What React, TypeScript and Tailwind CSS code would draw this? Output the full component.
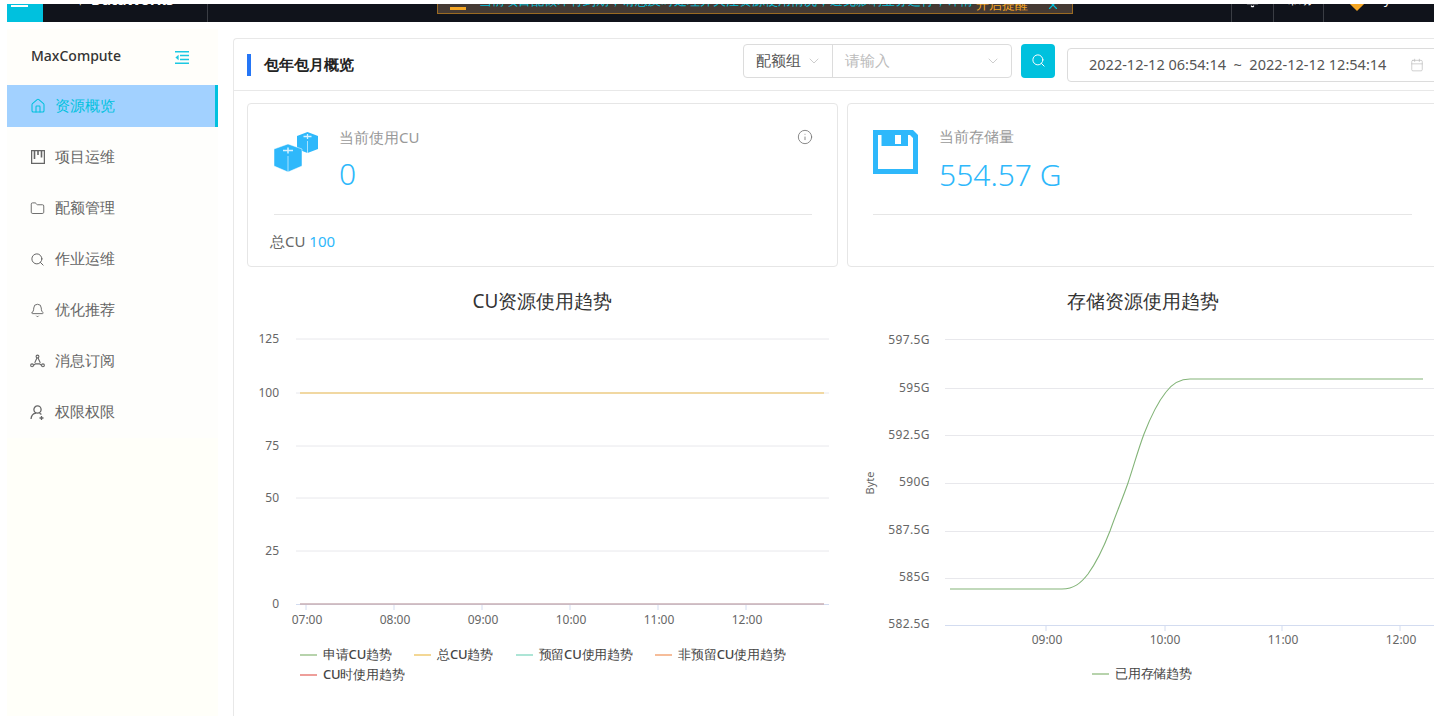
import { Bell, Calendar, ChevronDown, Folder, Home, Info, Search, X } from "lucide-react";

const FONT = "font-['Noto_Sans','Noto_Sans_CJK_SC',sans-serif]";

function KanbanIcon() {
  return (
    <svg viewBox="0 0 14 14" className="w-[14px] h-[14px]" fill="none" stroke="currentColor" strokeWidth="1.3">
      <rect x="0.6" y="0.6" width="12.8" height="12.8" />
      <path d="M3.5 1v8M7 1v4M10.500 1v6.500" strokeWidth="1.600" />
    </svg>
  );
}

function NetworkIcon() {
  return (
    <svg viewBox="0 0 16 14" className="w-[15px] h-[14px]" fill="none" stroke="currentColor" strokeWidth="1.2">
      <circle cx="8" cy="2.2" r="1.5" />
      <circle cx="2.2" cy="11.6" r="1.5" />
      <circle cx="13.8" cy="11.6" r="1.5" />
      <path d="M7.4 3.8 5 9M8.6 3.8 11 9M3.8 11.6l2-1.6h4.4l2 1.6" />
    </svg>
  );
}

function UserAddIcon() {
  return (
    <svg viewBox="0 0 15 15" className="w-[15px] h-[15px]" fill="none" stroke="currentColor" strokeWidth="1.3">
      <circle cx="7.5" cy="4.5" r="3.6" />
      <path d="M1 14c.3-3.4 2.2-5.6 5-5.900M9.400 8.400c.8.2 1.500.6 2 1.100M11.500 11v4M9.500 13h4" />
    </svg>
  );
}

function CollapseIcon() {
  return (
    <svg viewBox="0 0 14 13" className="w-[14px] h-[13px]" fill="none" stroke="#1cc8e2" strokeWidth="1.4">
      <path d="M0 .8h14M5 4.500h9M5 8.500h9M0 12.200h14" />
      <path d="M3.600 3.800 .4 6.500l3.200 2.700z" fill="#1cc8e2" stroke="none" />
    </svg>
  );
}

function CubesIcon() {
  return (
    <svg viewBox="0 0 44 40" className="w-[44px] h-[40px]">
      <path d="M33.500 0 44 4v13l-10.500 4L23 17V4z" fill="#2eb8fb" />
      <path d="M33.500 9v12" stroke="#fff" strokeWidth=".6" />
      <path d="M29.500 4.500h8M33.500 2v5" stroke="#d8f1ff" strokeWidth="1.300" />
      <path d="M14 12l14 5v17l-14 6-14-6V17z" fill="#2eb8fb" stroke="#fff" strokeWidth=".5" />
      <path d="M14 24v16" stroke="#fff" strokeWidth=".6" />
      <path d="M9 18.500h10M14 15.500v6" stroke="#d8f1ff" strokeWidth="1.500" />
    </svg>
  );
}

function FloppyIcon() {
  return (
    <svg viewBox="0 0 45 44" className="w-[45px] h-[44px]">
      <path d="M0 0h40l5 5v39H0z" fill="#2eb8fb" />
      <path d="M5 5h3.500v11H35V5h2l3 3v31H5z" fill="#fff" />
      <rect x="22" y="5" width="6" height="9" fill="#fff" />
    </svg>
  );
}

const navItems = [
  { label: "项目运维", icon: <KanbanIcon /> },
  { label: "配额管理", icon: <Folder className="w-[15px] h-[15px]" strokeWidth={1.5} /> },
  { label: "作业运维", icon: <Search className="w-[15px] h-[15px]" strokeWidth={1.6} /> },
  { label: "优化推荐", icon: <Bell className="w-[15px] h-[15px]" strokeWidth={1.5} /> },
  { label: "消息订阅", icon: <NetworkIcon /> },
  { label: "权限权限", icon: <UserAddIcon /> },
];

function TopBar() {
  return (
    <header className="mt-1 ml-[7px] h-[18px] flex items-start overflow-hidden bg-[#10131b] text-white">
      <div className="w-9 h-[18px] bg-[#00c1de] shrink-0 pl-1 pt-px">
        <div className="w-[17px] h-0.5 bg-white" />
      </div>
      <div className="w-[165px] h-[18px] border-r border-[#3a3d44] shrink-0 pl-[31px]">
        <div className="-mt-[15px] text-[15px] leading-5 font-bold whitespace-nowrap">✦ DataWorks</div>
      </div>
      <div className="ml-[229px] w-[636px] h-[10px] shrink-0 flex items-end border border-t-0 border-[#9a6a22] bg-[#453a33] overflow-hidden">
        <div className="ml-[12px] mb-[3px] w-[16px] h-[3px] bg-[#f5a623] shrink-0" />
        <span className="ml-[13px] mb-[3px] w-[495px] shrink-0 text-[13px] leading-5 text-[#00c1de] whitespace-nowrap overflow-hidden">
          当前项目配额即将到期，请您及时处理并关注资源使用情况，避免影响业务运行，详情请查看通知内容
        </span>
        <span className="ml-[2px] -mb-px text-[13px] leading-5 text-[#f5a623] whitespace-nowrap">开启提醒</span>
        <X className="ml-[18px] mb-px w-[14px] h-[14px] text-[#00c1de] shrink-0" />
      </div>
      <div className="ml-[158px] w-[42px] h-[18px] border-l border-[#3a3d44] shrink-0 flex justify-center">
        <Bell className="-mt-[11px] w-[15px] h-[15px]" />
      </div>
      <div className="w-[51px] h-[18px] border-x border-[#3a3d44] shrink-0 text-center">
        <div className="-mt-[15px] text-[13px] leading-5">帮助</div>
      </div>
      <div className="flex shrink-0 pl-[28px]">
        <div className="w-[10px] h-[10px] -mt-[5px] rotate-45 bg-[#f5a623]" />
        <div className="ml-[22px] -mt-[15px] text-[13px] leading-5">y</div>
      </div>
    </header>
  );
}

function Sidebar() {
  return (
    <aside className="mt-[7px] ml-[7px] w-[211px] shrink-0 flex flex-col bg-[#fefefc]">
      <div className="h-[56px] flex items-center justify-between pl-[24px] pr-[29px] bg-[#fffefa]">
        <span className="-mt-1 text-[14px] font-medium text-[#333]">MaxCompute</span>
        <CollapseIcon />
      </div>
      <nav className="flex flex-col gap-[9px] text-[15px] pb-[5px]">
        <a className="h-[42px] flex items-center pl-[23px] gap-[10px] bg-[#a2d1ff] text-[#00c1de] border-r-[3px] border-[#00c1de]">
          <Home className="w-4 h-4" strokeWidth={1.6} />
          <span className="-ml-px -mt-[2px]">资源概览</span>
        </a>
        {navItems.map((item) => (
          <a key={item.label} className="h-[42px] flex items-center pl-[23px] gap-[10px] text-[#666]">
            <span className="w-[15px] flex justify-center">{item.icon}</span>
            <span className="-mt-[2px]">{item.label}</span>
          </a>
        ))}
      </nav>
      <div className="flex-1 bg-[#fffff9]" />
    </aside>
  );
}

function Toolbar() {
  return (
    <div className="h-[52px] flex items-center border-b border-[#e8e8e8] pl-[13px] pr-[5px]">
      <div className="w-1 h-[22px] bg-[#2576f6]" />
      <h2 className="ml-[13px] text-[15px] font-bold text-[#222]">包年包月概览</h2>
      <div className="ml-auto -mt-[8px] flex h-[34px] w-[269px] border border-[#dcdcdc] rounded-sm text-[15px]">
        <div className="w-[89px] flex items-center justify-between pl-3 pr-[10px] border-r border-[#dcdcdc] text-[#555]">
          <span className="-mt-px">配额组</span>
          <ChevronDown className="w-4 h-4 text-[#bbb]" strokeWidth={1.1} />
        </div>
        <div className="flex-1 flex items-center justify-between pl-3 pr-[10px] text-[#bbb]">
          <span className="-mt-px">请输入</span>
          <ChevronDown className="w-4 h-4" strokeWidth={1.1} />
        </div>
      </div>
      <button className="ml-[9px] -mt-[8px] w-[34px] h-[34px] rounded-sm bg-[#00c1de] flex items-center justify-center text-white">
        <Search className="w-[15px] h-[15px]" strokeWidth={1.6} />
      </button>
      <div className="ml-3 w-[373px] h-[34px] flex items-center border border-[#dcdcdc] rounded-sm pl-[21px] pr-[15px] text-[14.5px] text-[#555]">
        <span className="whitespace-nowrap">2022-12-12 06:54:14&nbsp; ~&nbsp; 2022-12-12 12:54:14</span>
        <Calendar className="ml-auto w-[14px] h-[14px] text-[#bbb]" strokeWidth={1.2} />
      </div>
    </div>
  );
}

function SummaryCards() {
  return (
    <div className="grid grid-cols-[591px_591px] gap-[9px] pl-[13px] pt-3">
      <section className="h-[164px] border border-[#e6e6e6] rounded-sm pl-[26px] pr-[25px] pt-[24px] flex flex-col">
        <div className="h-[87px] flex items-start border-b border-[#e6e6e6]">
          <div className="mt-[4px]"><CubesIcon /></div>
          <div className="ml-[21px] -mt-px">
            <div className="text-[15px] leading-5 text-[#999]">当前使用CU</div>
            <div className="mt-[7px] text-[30px] leading-10 font-light text-[#2eb8fb]">0</div>
          </div>
          <Info className="ml-auto -mr-px w-4 h-4 mt-px text-[#777]" strokeWidth={1.3} />
        </div>
        <div className="-ml-1 mt-4 text-[15px] leading-5 text-[#666]">
          总CU <span className="text-[#2eb8fb]">100</span>
        </div>
      </section>
      <section className="h-[164px] border border-[#e6e6e6] rounded-sm px-[25px] pt-[26px] flex flex-col">
        <div className="h-[85px] flex items-start border-b border-[#e6e6e6]">
          <FloppyIcon />
          <div className="ml-[21px] -mt-1">
            <div className="text-[15px] leading-5 text-[#999]">当前存储量</div>
            <div className="mt-[9px] text-[30px] leading-10 font-light text-[#2eb8fb]">554.57 G</div>
          </div>
        </div>
      </section>
    </div>
  );
}

function Legend({ color, label }: { color: string; label: string }) {
  return (
    <div className="flex items-center gap-[6px] h-5 text-[13px] tracking-[-0.2px] font-medium text-[#444]">
      <span className="w-[17px] h-0.5 shrink-0" style={{ backgroundColor: color }} />
      <span className="whitespace-nowrap">{label}</span>
    </div>
  );
}

function CuChart() {
  const rows: [number, string][] = [[339, "125"], [393, "100"], [446, "75"], [498, "50"], [551, "25"]];
  const ticks: [number, string][] = [[306, "07:00"], [394, "08:00"], [482, "09:00"], [570, "10:00"], [658, "11:00"], [746, "12:00"]];
  return (
    <svg viewBox="247 320 591 324" className="w-[591px] h-[324px] block">
      {rows.map(([y, label]) => (
        <g key={label}>
          <line x1="296" x2="829" y1={y} y2={y} stroke="#e8e8ec" />
          <text x="279" y={y + 4} textAnchor="end" fontSize="12" fill="#666">{label}</text>
        </g>
      ))}
      <line x1="296" x2="829" y1="604.500" y2="604.500" stroke="#d3dcf0" />
      <text x="279" y="608" textAnchor="end" fontSize="12" fill="#666">0</text>
      {ticks.map(([x, label]) => (
        <g key={label}>
          <line x1={x} x2={x} y1="604" y2="610" stroke="#d3dcf0" />
          <text x={x + 1} y="624" textAnchor="middle" fontSize="12" fill="#666">{label}</text>
        </g>
      ))}
      <line x1="300" x2="824" y1="393" y2="393" stroke="#f0cf86" strokeWidth="1.6" />
      <line x1="300" x2="824" y1="604" y2="604" stroke="#c9afb4" strokeWidth="1.6" />
    </svg>
  );
}

function StorageChart() {
  const rows: [number, number, string][] = [
    [339.500, 344, "597.5G"],
    [388.500, 392, "595G"],
    [435.500, 439, "592.5G"],
    [483.500, 486, "590G"],
    [531.500, 534, "587.5G"],
    [578.500, 581, "585G"],
  ];
  const ticks: [number, number, string][] = [[1046, 1047, "09:00"], [1165, 1165, "10:00"], [1282, 1283, "11:00"], [1400, 1401, "12:00"]];
  return (
    <svg viewBox="847 320 591 324" className="w-[591px] h-[324px] block">
      {rows.map(([y, ty, label]) => (
        <g key={label}>
          <line x1="945" x2="1438" y1={y} y2={y} stroke="#e8e8ec" />
          <text x="930" y={ty} textAnchor="end" fontSize="12" letterSpacing=".4" fill="#666">{label}</text>
        </g>
      ))}
      <line x1="945" x2="1438" y1="625.500" y2="625.500" stroke="#d3dcf0" />
      <text x="930" y="628" textAnchor="end" fontSize="12" letterSpacing=".4" fill="#666">582.5G</text>
      {ticks.map(([x, tx, label]) => (
        <g key={label}>
          <line x1={x} x2={x} y1="625" y2="631" stroke="#d3dcf0" />
          <text x={tx} y="644" textAnchor="middle" fontSize="12" fill="#666">{label}</text>
        </g>
      ))}
      <text x="0" y="0" transform="translate(874 483) rotate(-90)" textAnchor="middle" fontSize="11" fill="#666">Byte</text>
      <path
        d="M950 589H1062C1074 589 1081 583 1088 574C1096 563 1103 549 1110 531C1116 514 1122 500 1128 483C1134 465 1138 450 1144 434C1151 416 1158 402 1166 392C1172 384 1179 379 1190 379H1423"
        fill="none"
        stroke="#83b478"
        strokeWidth="1.100"
      />
    </svg>
  );
}

function Charts() {
  return (
    <div className="grid grid-cols-[591px_591px] gap-[9px] pl-[13px] pt-5">
      <div>
        <h3 className="text-center text-[19px] leading-7 text-[#333]">CU资源使用趋势</h3>
        <div className="mt-[5px]"><CuChart /></div>
        <div className="mt-px ml-[53px] w-[520px] flex flex-wrap gap-x-[22.5px]">
          <Legend color="#b7d3ac" label="申请CU趋势" />
          <Legend color="#f3d795" label="总CU趋势" />
          <Legend color="#ade5d6" label="预留CU使用趋势" />
          <Legend color="#f6bd9a" label="非预留CU使用趋势" />
          <Legend color="#ee9e9a" label="CU时使用趋势" />
        </div>
      </div>
      <div>
        <h3 className="text-center text-[19px] leading-7 text-[#333]">存储资源使用趋势</h3>
        <div className="mt-[5px]"><StorageChart /></div>
        <div className="mt-5 ml-[245px]">
          <Legend color="#b7d3ac" label="已用存储趋势" />
        </div>
      </div>
    </div>
  );
}

export default function App() {
  return (
    <div className={`${FONT} w-[1434px] h-[716px] overflow-hidden bg-white flex flex-col`}>
      <TopBar />
      <div className="flex-1 min-h-0 flex">
        <Sidebar />
        <main className="mt-4 ml-[15px] w-[1212px] shrink-0 border-l border-t border-[#e8e8e8] rounded-tl">
          <Toolbar />
          <SummaryCards />
          <Charts />
        </main>
      </div>
    </div>
  );
}
